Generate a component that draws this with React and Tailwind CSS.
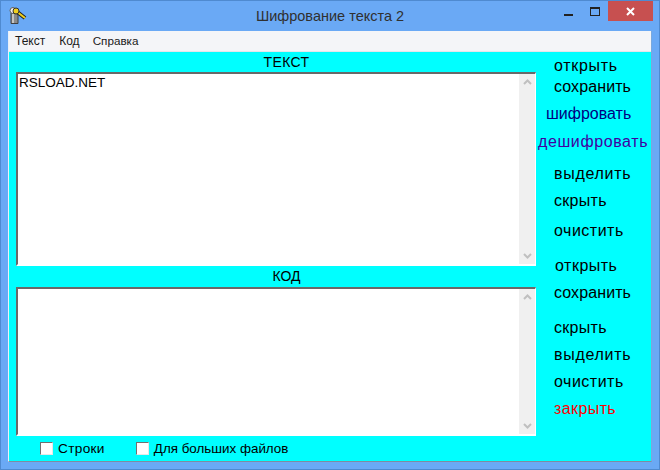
import React from 'react';

const sideButtons = [
  { label: 'открыть', cls: 'mt-[4px] ml-[18px] tracking-[0.7px] text-black' },
  { label: 'сохранить', cls: 'mt-[1px] ml-[18px] tracking-[0.1px] text-black' },
  { label: 'шифровать', cls: 'mt-[7px] ml-[10px] text-[#000080]' },
  { label: 'дешифровать', cls: 'mt-[8px] ml-[2px] tracking-[0.6px] text-[#4000a0]' },
  { label: 'выделить', cls: 'mt-[12px] ml-[18px] tracking-[0.7px] text-black' },
  { label: 'скрыть', cls: 'mt-[7px] ml-[18px] tracking-[0.3px] text-black' },
  { label: 'очистить', cls: 'mt-[10px] ml-[18px] tracking-[0.5px] text-black' },
  { label: 'открыть', cls: 'mt-[15px] ml-[19px] tracking-[0.5px] text-black' },
  { label: 'сохранить', cls: 'mt-[7px] ml-[18px] tracking-[0.1px] text-black' },
  { label: 'скрыть', cls: 'mt-[15px] ml-[18px] tracking-[0.3px] text-black' },
  { label: 'выделить', cls: 'mt-[7px] ml-[18px] tracking-[0.7px] text-black' },
  { label: 'очистить', cls: 'mt-[7px] ml-[18px] tracking-[0.5px] text-black' },
  { label: 'закрыть', cls: 'mt-[7px] ml-[18px] tracking-[0.4px] text-[#ff0000]' },
];

const Chevron = ({ up }) => (
  <svg width="9" height="6" viewBox="0 0 9 6" fill="none" stroke="#c0c0c0" strokeWidth="2">
    <path d={up ? 'M1 5l3.5-3.5L8 5' : 'M1 1l3.5 3.5L8 1'} />
  </svg>
);

const Memo = ({ text, height }) => (
  <div className={`flex ${height} w-[520px] border-t-2 border-l-2 border-r border-b-2 border-t-[#696969] border-l-[#696969] border-r-white border-b-white bg-white`}>
    <div className="flex-1 px-[1px] text-[13.5px] leading-[17px] text-black">{text}</div>
    <div className="flex w-[16px] flex-col items-center justify-between bg-[#f0f0f0] py-[5px]">
      <Chevron up />
      <Chevron />
    </div>
  </div>
);

const Check = ({ label, cls, textCls }) => (
  <label className={`flex items-center gap-[5px] ${cls}`}>
    <span className="h-[13px] w-[13px] border-t border-l border-b border-r border-t-[#707070] border-l-[#707070] border-r-[#e8e8e8] border-b-[#e8e8e8] bg-white" />
    <span className={`leading-[16px] text-black ${textCls}`}>{label}</span>
  </label>
);

export default function App() {
  return (
    <div className="flex h-[470px] w-[660px] flex-col overflow-hidden border border-[#4f8ad0] bg-[#6aa9f5] font-['Liberation_Sans',Arial,sans-serif]">
      {/* Title bar */}
      <div className="relative flex h-[30px] shrink-0 items-center justify-center">
        <svg className="absolute top-[5px] left-[8px]" width="18" height="19" viewBox="0 0 18 19">
          <path d="M2 7h7v10.5H2z" fill="#8a8a8a" stroke="#404040" strokeWidth="1" />
          <path d="M4 8v9" stroke="#d8d8d8" strokeWidth="1.5" />
          <circle cx="4" cy="4.5" r="3" fill="#eeeeee" stroke="#606060" strokeWidth="1" />
          <path d="M7 5l9 7" stroke="#202020" strokeWidth="4" />
          <path d="M7 5l9 7" stroke="#f0d020" strokeWidth="2" />
          <circle cx="7" cy="5" r="3" fill="#f0d020" stroke="#303030" strokeWidth="1" />
        </svg>
        <span className="pt-[2px] text-[14.5px] text-[#303030]">Шифрование текста 2</span>
        <div className="absolute top-[13px] left-[563px] h-[2px] w-[9px] bg-[#222]" />
        <div className="absolute top-[6px] left-[589px] h-[9px] w-[10px] border border-t-2 border-[#222]" />
        <div className="absolute top-0 left-[607px] flex h-[20px] w-[45px] items-center justify-center bg-[#c75050]">
          <svg width="9" height="9" viewBox="0 0 9 9" stroke="white" strokeWidth="2">
            <path d="M1 1l7 7M8 1l-7 7" />
          </svg>
        </div>
      </div>

      {/* Client area */}
      <div className="mx-[7px] flex h-[431px] flex-col border-r border-b border-l border-r-[#7aa8dc] border-b-[#7d8da0] border-l-[#e8f0fa]">
        <div className="flex h-[21px] shrink-0 items-center gap-[14px] border-b border-[#e4e6ea] bg-[#f4f5f8] pl-[6px] text-[12px] text-[#1a1a1a]">
          <span>Текст</span>
          <span>Код</span>
          <span className="-ml-px text-[11.7px]">Справка</span>
        </div>
        <div className="flex flex-1 bg-[#00ffff]">
          <div className="ml-[7px] flex w-[520px] flex-col">
            <div className="flex h-[20px] items-center justify-center pl-[21px] text-[14px] tracking-[0.4px] text-black">ТЕКСТ</div>
            <Memo text="RSLOAD.NET" height="h-[194px]" />
            <div className="flex h-[21px] items-center justify-center pl-[21px] text-[14px] text-black">КОД</div>
            <Memo text="" height="h-[149px]" />
            <div className="flex h-[25px] items-center">
              <Check label="Строки" cls="ml-[24px]" textCls="text-[13.7px] tracking-[0.3px]" />
              <Check label="Для больших файлов" cls="ml-[31px]" textCls="text-[13.4px]" />
            </div>
          </div>
          <div className="flex flex-col">
            {sideButtons.map((b, i) => (
              <span key={i} className={`h-[20px] text-[16px] leading-[20px] whitespace-nowrap ${b.cls}`}>
                {b.label}
              </span>
            ))}
          </div>
        </div>
      </div>
    </div>
  );
}
